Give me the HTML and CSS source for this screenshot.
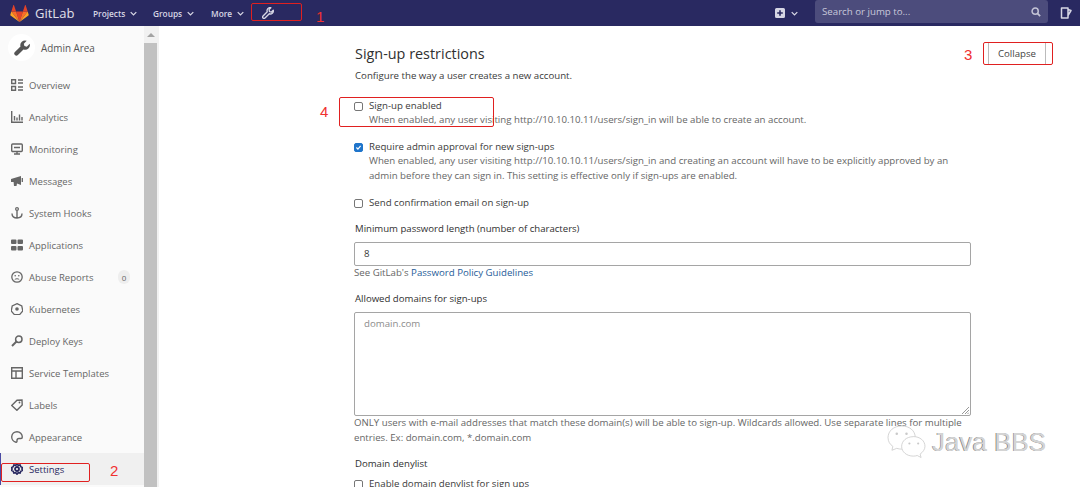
FILE: index.html
```html
<!DOCTYPE html>
<html lang="en">
<head>
<meta charset="utf-8">
<title>Admin Area</title>
<link rel="stylesheet" href="styles.css">
</head>
<body>
<header class="nav">
  <svg class="logo" viewBox="0 0 24 22" width="19" height="17"><path fill="#e24329" d="M12 22l4.400-13.600H7.600z"/><path fill="#fc6d26" d="M12 22L7.600 8.400H1.400z"/><path fill="#fca326" d="M1.400 8.400L.1 12.500c-.1.4 0 .8.3 1L12 22z"/><path fill="#e24329" d="M1.400 8.400h6.200L4.900.3c-.1-.4-.7-.4-.9 0z"/><path fill="#fc6d26" d="M12 22l4.400-13.600h6.200z"/><path fill="#fca326" d="M22.600 8.400l1.300 4.100c.1.4 0 .8-.3 1L12 22z"/><path fill="#e24329" d="M22.600 8.400h-6.200L19.100.3c.1-.4.7-.4.9 0z"/></svg>
  <span class="brand">GitLab</span>
  <span class="menu m1">Projects <svg class="chev" viewBox="0 0 10 6"><path d="M1 1l4 4 4-4"/></svg></span>
  <span class="menu m2">Groups <svg class="chev" viewBox="0 0 10 6"><path d="M1 1l4 4 4-4"/></svg></span>
  <span class="menu m3">More <svg class="chev" viewBox="0 0 10 6"><path d="M1 1l4 4 4-4"/></svg></span>
  <svg class="wrench-nav" viewBox="0 0 16 16" width="12" height="12"><use href="#wrench-o"/></svg>
  <span class="spacer"></span>
  <svg class="plus" viewBox="0 0 10 10" width="10" height="10"><path fill="#d6d6e4" fill-rule="evenodd" d="M1.500 0h7A1.500 1.500 0 0 1 10 1.500v7A1.500 1.500 0 0 1 8.500 10h-7A1.500 1.500 0 0 1 0 8.500v-7A1.500 1.500 0 0 1 1.500 0zM4.200 2.200v2h-2v1.600h2v2h1.600v-2h2V4.200h-2v-2z"/></svg>
  <svg class="chev plus-chev" viewBox="0 0 10 6"><path d="M1 1l4 4 4-4"/></svg>
  <div class="search">
    <span>Search or jump to...</span>
    <svg viewBox="0 0 12 12" width="10" height="10"><circle cx="5" cy="5" r="3.700" fill="none" stroke="#c4c4d6" stroke-width="1.800"/><path d="M8 8l3 3" stroke="#c4c4d6" stroke-width="2"/></svg>
  </div>
  <svg class="todo" viewBox="0 0 12 12" width="12" height="12"><path fill="none" stroke="#d6d6e4" stroke-width="1.500" stroke-linejoin="round" d="M1.500 1h6.500v10H1.500zM8 2.500l3 1-3 5"/></svg>
</header>

<svg class="defs" width="0" height="0"><defs>
  <symbol id="wrench" viewBox="0 0 16 16"><path fill="currentColor" d="M15.700 3.800l-2.900 2.900-2.400-.6-.6-2.400L12.700.8a4.700 4.700 0 0 0-6.200 5.700L.9 12.100a2.100 2.100 0 0 0 3 3l5.600-5.600a4.700 4.700 0 0 0 6.200-5.700z"/></symbol>
  <symbol id="wrench-o" viewBox="0 0 16 16"><path fill="none" stroke="currentColor" stroke-width="1.800" stroke-linejoin="round" d="M15 4.300l-2.400 2.400-2.600-.6-.6-2.600L11.800 1a4 4 0 0 0-4.800 5.300L1.400 12a1.800 1.800 0 0 0 2.600 2.600l5.700-5.600A4 4 0 0 0 15 4.300z"/></symbol>
</defs></svg>

<div class="page">
  <aside class="sidebar">
    <div class="side-inner">
      <div class="context">
        <span class="avatar"><svg viewBox="0 0 16 16" width="16" height="16"><use href="#wrench"/></svg></span>
        <span class="context-title">Admin Area</span>
      </div>
      <ul class="side-list">
        <li><svg viewBox="0 0 12 12"><path d="M.7.7h3.800v3.800H.7zM.7 7.500h3.800v3.800H.7z" fill="none" stroke="currentColor" stroke-width="1.400"/><path d="M7 1h5M7 4h5M7 8h5M7 11h5" stroke="currentColor" stroke-width="1.400"/></svg>Overview</li>
        <li><svg viewBox="0 0 12 12"><path d="M.7 0v11.300H12" fill="none" stroke="currentColor" stroke-width="1.400"/><path d="M3.500 5v4.500M6 6.500v3M8.500 3.500v6M11 6v3.500" stroke="currentColor" stroke-width="1.400"/></svg>Analytics</li>
        <li><svg viewBox="0 0 12 12"><rect x=".7" y="1" width="10.600" height="7.500" rx="1" fill="none" stroke="currentColor" stroke-width="1.400"/><path d="M3 11h6M6 8.500V11M3 4.500h6" stroke="currentColor" stroke-width="1.400"/></svg>Monitoring</li>
        <li><svg viewBox="0 0 12 12"><path fill="currentColor" d="M0 4l10-3v9L6 8.500 5.500 11H3L2.600 7H0z"/><path d="M11.300 3v4" stroke="currentColor" stroke-width="1.300"/></svg>Messages</li>
        <li><svg viewBox="0 0 12 12"><circle cx="6" cy="2" r="1.400" fill="none" stroke="currentColor" stroke-width="1.200"/><path d="M6 3.500V11M1 6.500c0 3 2 4.500 5 4.500s5-1.500 5-4.500" fill="none" stroke="currentColor" stroke-width="1.400"/></svg>System Hooks</li>
        <li><svg viewBox="0 0 12 12"><path fill="currentColor" fill-rule="evenodd" d="M1 .5h3.500a1 1 0 0 1 1 1V4a1 1 0 0 1-1 1H1a1 1 0 0 1-1-1V1.500a1 1 0 0 1 1-1zM7.500.5H11a1 1 0 0 1 1 1V4a1 1 0 0 1-1 1H7.500a1 1 0 0 1-1-1V1.500a1 1 0 0 1 1-1zM1 7h3.500a1 1 0 0 1 1 1v2.500a1 1 0 0 1-1 1H1a1 1 0 0 1-1-1V8a1 1 0 0 1 1-1zM7.500 7H11a1 1 0 0 1 1 1v2.500a1 1 0 0 1-1 1H7.500a1 1 0 0 1-1-1V8a1 1 0 0 1 1-1z"/></svg>Applications</li>
        <li><svg viewBox="0 0 12 12"><circle cx="6" cy="6" r="5.200" fill="none" stroke="currentColor" stroke-width="1.300"/><circle cx="4.200" cy="4.800" r=".8" fill="currentColor"/><circle cx="7.800" cy="4.800" r=".8" fill="currentColor"/><path d="M3.800 8.500c1-1 3.400-1 4.400 0" fill="none" stroke="currentColor"/></svg>Abuse Reports<span class="count">0</span></li>
        <li><svg viewBox="0 0 12 12"><path d="M6 .7l4.800 2.300 1 5-3.200 3.600H3.400L.2 8l1-5z" fill="none" stroke="currentColor" stroke-width="1.300"/><circle cx="6" cy="6" r="1.800" fill="currentColor"/></svg>Kubernetes</li>
        <li><svg viewBox="0 0 12 12"><circle cx="7.800" cy="4.200" r="3.200" fill="none" stroke="currentColor" stroke-width="1.500"/><path d="M5.500 6.500L1 11" stroke="currentColor" stroke-width="2"/></svg>Deploy Keys</li>
        <li><svg viewBox="0 0 12 12"><path d="M.7.7h10.600v10.600H.7zM.7 4h10.600M5 4v7.300" fill="none" stroke="currentColor" stroke-width="1.400"/></svg>Service Templates</li>
        <li><svg viewBox="0 0 12 12"><path d="M.7 6.500L6 1.200 11 1l.2 5-5.300 5.300z" fill="none" stroke="currentColor" stroke-width="1.400"/><circle cx="8.500" cy="3.500" r=".9" fill="currentColor"/></svg>Labels</li>
        <li><svg viewBox="0 0 12 12"><path d="M6 .7a5.300 5.300 0 0 0-1 10.500c1 .1 1-.8 1-1.700 0-1.500 1-2 2-2h2c1.200 0 1.300-1 1.300-1.500A5.300 5.300 0 0 0 6 .7z" fill="none" stroke="currentColor" stroke-width="1.400"/></svg>Appearance</li>
        <li class="active"><svg viewBox="0 0 12 12"><circle cx="6" cy="6" r="2" fill="none" stroke="currentColor" stroke-width="1.800"/><path d="M6 .8l1.200 1.500 1.900-.4.700 1.800 1.700.9-.6 1.400.6 1.400-1.700.9-.7 1.800-1.900-.4L6 11.200l-1.200-1.500-1.900.4-.7-1.800-1.700-.9.600-1.400-.6-1.400 1.700-.9.700-1.800 1.900.4z" fill="none" stroke="currentColor" stroke-width="1.600"/></svg>Settings</li>
      </ul>
    </div>
    <div class="scrollbar"><span class="arrow"></span><span class="thumb"></span></div>
  </aside>

  <main class="content">
    <div class="section-head">
      <div class="head-text">
        <h4>Sign-up restrictions</h4>
        <p class="lead">Configure the way a user creates a new account.</p>
      </div>
      <span class="btn">Collapse</span>
    </div>

    <div class="check">
      <span class="box"></span>
      <div><div class="label">Sign-up enabled</div>
      <div class="help">When enabled, any user visiting http://10.10.10.11/users/sign_in will be able to create an account.</div></div>
    </div>
    <div class="check">
      <span class="box on"><svg viewBox="0 0 10 10" width="9" height="9"><path d="M2 5l2.200 2.200L8 2.800" fill="none" stroke="#fff" stroke-width="1.700"/></svg></span>
      <div><div class="label">Require admin approval for new sign-ups</div>
      <div class="help">When enabled, any user visiting http://10.10.10.11/users/sign_in and creating an account will have to be explicitly approved by an admin before they can sign in. This setting is effective only if sign-ups are enabled.</div></div>
    </div>
    <div class="check">
      <span class="box"></span>
      <div class="label">Send confirmation email on sign-up</div>
    </div>

    <div class="field">
      <div class="field-label">Minimum password length (number of characters)</div>
      <div class="input">8</div>
      <div class="help">See GitLab's <span class="link">Password Policy Guidelines</span></div>
    </div>

    <div class="field">
      <div class="field-label">Allowed domains for sign-ups</div>
      <div class="textarea">domain.com<svg class="grip" viewBox="0 0 8 8" width="8" height="8"><path d="M8 1L1 8M8 4L4 8M8 6.500L6.500 8" stroke="#999" fill="none"/></svg></div>
      <div class="help">ONLY users with e-mail addresses that match these domain(s) will be able to sign-up. Wildcards allowed. Use separate lines for multiple entries. Ex: domain.com, *.domain.com</div>
    </div>

    <div class="field">
      <div class="field-label">Domain denylist</div>
      <div class="check"><span class="box"></span><div class="label">Enable domain denylist for sign ups</div></div>
    </div>
  </main>
</div>

<span class="mark mark1"></span><span class="num n1">1</span>
<span class="mark mark2"></span><span class="num n2">2</span>
<span class="mark mark3"></span><span class="num n3">3</span>
<span class="mark mark4"></span><span class="num n4">4</span>

<div class="watermark">
  <svg viewBox="0 0 40 36" width="39" height="35"><g fill="#fff" stroke="#c9c9c9" stroke-width=".8"><path d="M15 1C7 1 1 6 1 13c0 4 2 7 5 9l-1 4 5-2c2 .6 3 .8 5 .8 8 0 14-5 14-12S23 1 15 1z"/><path d="M27 12c-7 0-12 4.500-12 10s5 10 12 10c1.500 0 3-.2 4-.6l4 2-1-3.500c3-2 5-5 5-8 0-5.500-5-10-12-10z"/></g><g fill="#c9c9c9"><circle cx="10" cy="9" r="1.300"/><circle cx="20" cy="9" r="1.300"/><circle cx="23" cy="19" r="1.100"/><circle cx="32" cy="19" r="1.100"/></g></svg>
  <span class="wm-text">Java BBS</span>
</div>
</body>
</html>
```
FILE: styles.css
```css
* { box-sizing: border-box; }
html, body { margin: 0; height: 487px; overflow: hidden; background: #fff; }
body { position: relative; font-family: "Open Sans", "Noto Sans", sans-serif; font-size: 9.660px; color: #3a3a3a; }

.nav { height: 26px; background: #292961; display: flex; align-items: center; padding-left: 10px; color: #d6d6e4; }
.brand { font-size: 13px; margin-left: 6px; width: 40px; color: #e0e0ea; }
.menu { font-size: 8.300px; font-weight: 600; display: flex; align-items: center; gap: 3px; }
.m1 { margin-left: 18px; width: 60px; }
.m2 { width: 58px; }
.m3 { width: 51px; }
.chev { width: 7px; height: 5px; margin-left: 2px; }
.chev path { fill: none; stroke: #d6d6e4; stroke-width: 1.800; }
.wrench-nav { color: #d6d6e4; }
.spacer { flex: 1; }
.plus-chev { margin-left: 6px; }
.search { width: 233px; height: 23px; margin: -3px 0 0 17px; background: #4c4c7c; border-radius: 3px; display: flex; align-items: center; justify-content: space-between; padding: 0 7px; color: #c8c8da; font-size: 9.700px; }
.todo { margin: 0 8px 0 12px; }

.page { display: flex; height: 461px; }
.sidebar { width: 159px; flex: none; display: flex; background: #fafafa; }
.side-inner { width: 144px; flex: none; }
.context { display: flex; align-items: center; height: 43px; padding-left: 8px; }
.avatar { width: 27px; height: 27px; border-radius: 50%; background: #fff; display: flex; align-items: center; justify-content: center; color: #555; }
.context-title { margin-left: 6px; font-weight: 500; font-size: 9.900px; color: #555; }
.side-list { list-style: none; margin: 0; padding: 0; }
.side-list li { height: 32px; display: flex; align-items: center; padding-left: 11px; color: #666; font-size: 9.500px; }
.side-list li svg { width: 12px; height: 12px; margin-right: 6px; flex: none; color: #666; }
.count { margin-left: auto; margin-right: 14px; width: 12px; height: 14px; border-radius: 7px; background: #eee; font-size: 8px; display: flex; align-items: center; justify-content: center; }
.side-list li.active { background: #f0f0f0; color: #292961; font-weight: 500; box-shadow: inset 1px 0 0 #4b4ba3; }
.side-list li.active svg { color: #292961; }
.scrollbar { width: 15px; background: #f1f1f1; display: flex; flex-direction: column; }
.arrow { height: 17px; flex: none; position: relative; }
.arrow::after { content: ""; position: absolute; left: 3px; top: 7px; border: 4px solid transparent; border-top: 0; border-bottom: 4px solid #a3a3a3; }
.thumb { flex: 1; width: 13px; background: #c1c1c1; }

.content { width: 617px; margin-left: 195px; padding-top: 20px; flex: none; }
.section-head { display: flex; justify-content: space-between; align-items: flex-start; margin-right: -75px; }
.head-text { padding-left: 1px; }
h4 { margin: 0; font-size: 14.400px; font-weight: 500; line-height: 16px; color: #303030; }
.lead { margin: 7px 0 0; line-height: 14px; }
.btn { margin: -3px 0 0 0; width: 58px; height: 21px; display: flex; align-items: center; justify-content: center; color: #444; border-left: 1px solid #bbb; border-right: 1px solid #bbb; }
.check { display: flex; margin-top: 12.500px; line-height: 14px; gap: 6px; }
.section-head + .check { margin-top: 16px; }
.box { width: 9px; height: 9px; flex: none; border: 1px solid #767676; border-radius: 2px; margin-top: 3px; background: #fff; display: flex; align-items: center; justify-content: center; }
.box.on { background: #1f75cb; border-color: #1f75cb; }
.label { line-height: 14px; }
.help { color: #666; line-height: 14.500px; }
.field { margin-top: 12px; }
.field-label { padding-left: 1px; font-size: 9.600px; font-weight: 500; line-height: 14px; margin-bottom: 6px; color: #303030; }
.input { height: 24px; border: 1px solid #a5a5a5; border-radius: 2px; padding-left: 9px; line-height: 22px; }
.link { color: #1f5d99; }
.textarea { position: relative; height: 104px; border: 1px solid #a5a5a5; border-radius: 2px; padding: 2px 9px; color: #8c8c8c; line-height: 18px; }
.grip { position: absolute; right: 1px; bottom: 1px; }
.field .check { margin-top: 6px; }

.mark { position: absolute; border: 1px solid #e02020; border-radius: 2px; }
.mark1 { left: 251px; top: 3px; width: 51px; height: 18px; }
.mark2 { left: 1px; top: 463px; width: 89px; height: 19px; }
.mark3 { left: 983px; top: 42px; width: 70px; height: 23px; }
.mark4 { left: 339px; top: 97px; width: 155px; height: 30px; }
.num { position: absolute; color: #f03030; font-family: "Liberation Sans", sans-serif; font-size: 15px; line-height: 16px; }
.n1 { left: 316px; top: 9px; }
.n2 { left: 110px; top: 463px; }
.n3 { left: 964px; top: 47px; }
.n4 { left: 320px; top: 104px; }

.watermark { position: absolute; left: 887px; top: 425px; display: flex; align-items: center; gap: 6px; font-family: "Liberation Sans", sans-serif; font-size: 26px; }
.wm-text { color: #d4d4d4; text-shadow: -0.6px 0 0 #7a7a7a; }
.defs { position: absolute; }
```
